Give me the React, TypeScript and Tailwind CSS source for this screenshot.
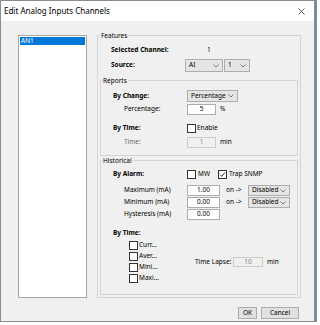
import React from "react";

function Chevron() {
  return (
    <svg width="6" height="4" viewBox="0 0 6 4" className="shrink-0">
      <path d="M0.5 0.5 L3 3 L5.5 0.5" fill="none" stroke="#606060" strokeWidth="0.8" />
    </svg>
  );
}

function Combo({ value, className }: { value: string; className: string }) {
  return (
    <div className={`flex items-center justify-between border border-[#adadad] bg-[#e5e5e5] pl-[3px] pr-[3px] ${className}`}>
      <span>{value}</span>
      <Chevron />
    </div>
  );
}

function Field({ value, className, disabled }: { value: string; className: string; disabled?: boolean }) {
  return (
    <div
      className={`flex h-full items-center justify-center border ${
        disabled ? "border-[#cccccc] bg-[#f0f0f0] text-[#838383]" : "border-[#abadb3] bg-white"
      } ${className}`}
    >
      {value}
    </div>
  );
}

function Check({ checked }: { checked?: boolean }) {
  return (
    <span className="flex h-[9px] w-[9px] shrink-0 items-center justify-center border border-[#333333] bg-white">
      {checked && (
        <svg width="7" height="7" viewBox="0 0 7 7">
          <path d="M1 3.6 L2.8 5.4 L6 1.4" fill="none" stroke="#222" strokeWidth="0.9" />
        </svg>
      )}
    </span>
  );
}

export default function App() {
  return (
    <div className="flex h-[325px] w-[317px] items-start overflow-hidden whitespace-nowrap bg-white font-['Noto_Sans',sans-serif] text-[6.5px] leading-none text-black">
      {/* ventana del diálogo */}
      <div className="flex h-[322px] w-[315px] flex-col border border-[#8c8c8c]">
        <div className="flex h-[20px] shrink-0 items-center justify-between bg-white pl-[3px] pr-[9px]">
          <span className="text-[8px]">Edit Analog Inputs Channels</span>
          <svg width="7" height="7" viewBox="0 0 7 7">
            <path d="M0.5 0.5 L6.5 6.5 M6.5 0.5 L0.5 6.5" stroke="#333" strokeWidth="0.8" />
          </svg>
        </div>

        <div className="flex flex-1 flex-col bg-[#f0f0f0] pl-[17px] pr-[13px] pt-[10px]">
          <div className="flex items-start">
            {/* lista de canales */}
            <div className="mt-[4px] h-[263px] w-[69px] border border-[#a6a6a6] bg-white p-px">
              <div className="flex h-[8px] items-center bg-[#0078d7] pl-px text-white">AN1</div>
            </div>

            <fieldset className="ml-[10px] h-[267px] w-[204px] border border-[#d5d5d5] px-[2px]">
              <legend className="px-px leading-[9px]">Features</legend>
              <div className="pl-[11px] pt-[3px]">
                <div className="flex h-[15px] items-center">
                  <span className="w-[74px] font-bold">Selected Channel:</span>
                  <span className="pl-[22px]">1</span>
                </div>
                <div className="flex h-[15px] items-center">
                  <span className="w-[74px] font-bold">Source:</span>
                  <Combo value="AI" className="h-[13px] w-[38px]" />
                  <Combo value="1" className="ml-px h-[13px] w-[26px]" />
                </div>
              </div>

              {/* Reports */}
              <fieldset className="mt-[3px] h-[80px] w-full border border-[#d5d5d5] pl-[12px]">
                <legend className="-ml-[11px] px-px leading-[9px]">Reports</legend>
                <div className="mt-[5px] flex h-[12px] items-center">
                  <span className="w-[74px] font-bold">By Change:</span>
                  <Combo value="Percentage" className="h-[12px] w-[51px]" />
                </div>
                <div className="mt-[2px] flex h-[11px] items-center">
                  <span className="w-[74px] pl-[11px]">Percentage:</span>
                  <Field value="5" className="w-[29px]" />
                  <span className="ml-[4px]">%</span>
                </div>
                <div className="mt-[7px] flex h-[12px] items-center">
                  <span className="w-[74px] font-bold">By Time:</span>
                  <Check />
                  <span className="ml-px">Enable</span>
                </div>
                <div className="mt-[3px] flex h-[11px] items-center">
                  <span className="w-[74px] pl-[11px] text-[#6d6d6d]">Time:</span>
                  <Field value="1" className="w-[29px]" disabled />
                  <span className="ml-[4px]">min</span>
                </div>
              </fieldset>

              {/* Historical */}
              <fieldset className="h-[139px] w-full border border-[#d5d5d5] pl-[12px]">
                <legend className="-ml-[11px] px-px leading-[9px]">Historical</legend>
                <div className="mt-[4px] flex h-[11px] items-center">
                  <span className="w-[74px] font-bold">By Alarm:</span>
                  <span className="flex w-[31px] items-center">
                    <Check />
                    <span className="ml-[2px]">MW</span>
                  </span>
                  <Check checked />
                  <span className="ml-[2px]">Trap SNMP</span>
                </div>
                {[
                  ["Maximum (mA)", "1.00", true],
                  ["Minimum (mA)", "0.00", true],
                  ["Hysteresis (mA)", "0.00", false],
                ].map(([label, val, sel], i) => (
                  <div key={i} className={`${i === 0 ? "mt-[5px]" : "mt-px"} flex h-[11px] items-center`}>
                    <span className="w-[74px] pl-[11px]">{label as string}</span>
                    <Field value={val as string} className="w-[33px]" />
                    {sel && (
                      <>
                        <span className="ml-[6px] w-[22px]">on -&gt;</span>
                        <Combo value="Disabled" className="h-[11px] w-[42px]" />
                      </>
                    )}
                  </div>
                ))}
                <div className="mt-[8px] flex h-[10px] items-center font-bold">By Time:</div>
                <div className="mt-[3px] flex items-center">
                  <div className="flex w-[82px] flex-col gap-[2px] pl-[16px]">
                    {["Curr...", "Aver...", "Mini...", "Maxi..."].map((t) => (
                      <div key={t} className="flex h-[9px] items-center">
                        <Check />
                        <span className="ml-[1px]">{t}</span>
                      </div>
                    ))}
                  </div>
                  <div className="flex h-[10px] items-center">
                    <span className="w-[38px]">Time Lapse:</span>
                    <Field value="10" className="w-[30px]" disabled />
                    <span className="ml-[4px]">min</span>
                  </div>
                </div>
              </fieldset>
            </fieldset>
          </div>

          <div className="mt-[9px] flex justify-end pr-[2px]">
            <button className="flex h-[12px] w-[19px] items-center justify-center border border-[#adadad] bg-[#e1e1e1]">OK</button>
            <button className="ml-[4px] flex h-[12px] w-[38px] items-center justify-center border border-[#adadad] bg-[#e1e1e1]">
              Cancel
            </button>
          </div>
        </div>
      </div>
      <div className="h-[322px] w-[2px] bg-[#6d8db5]" />
    </div>
  );
}
